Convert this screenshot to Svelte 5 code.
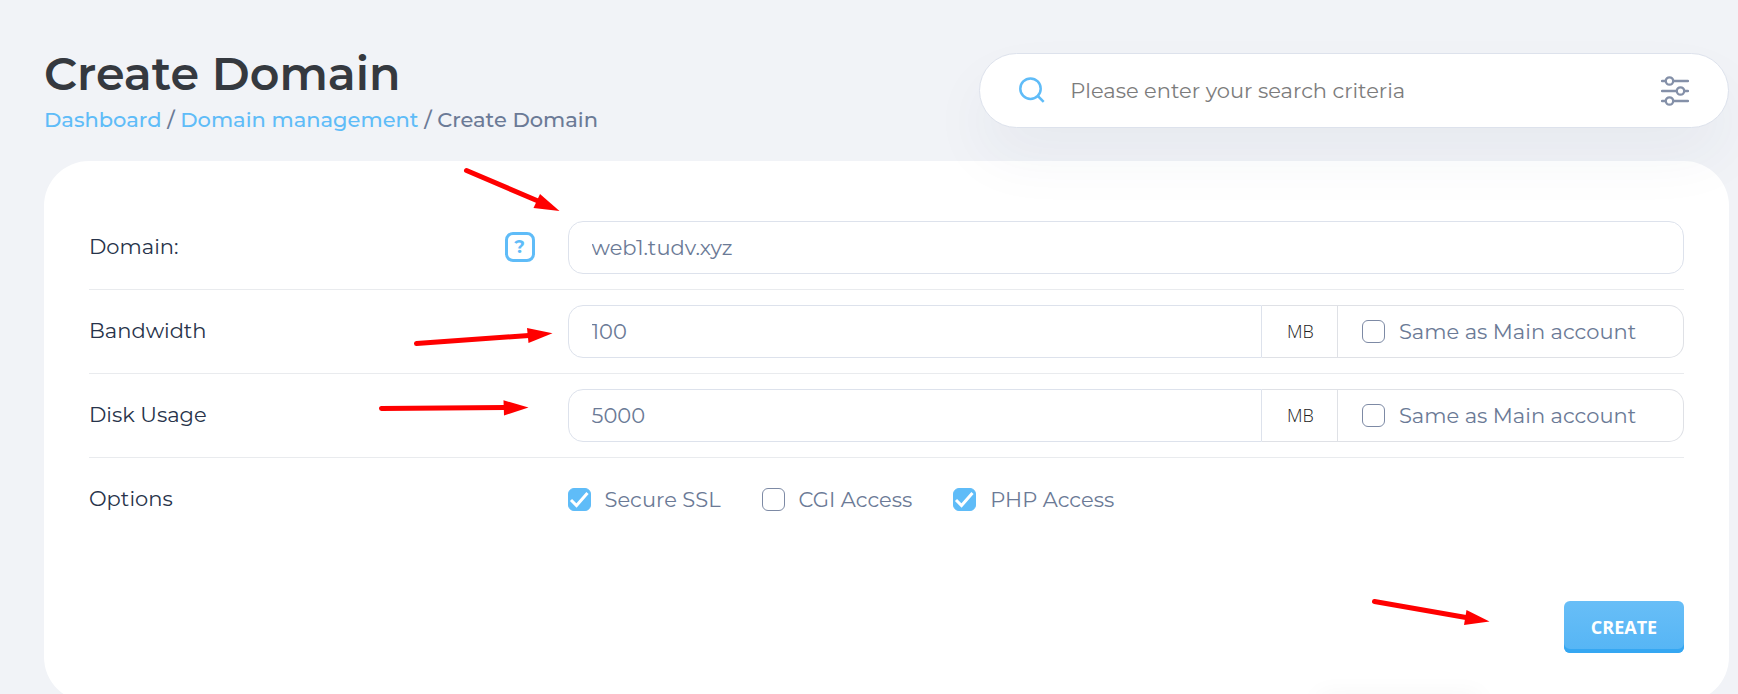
<script>
  let search = $state('');
  let domain = $state('web1.tudv.xyz');
  let limits = $state([
    { id: 'bandwidth', label: 'Bandwidth', value: '100', same: false },
    { id: 'disk', label: 'Disk Usage', value: '5000', same: false }
  ]);
  let options = $state([
    { label: 'Secure SSL', on: true },
    { label: 'CGI Access', on: false },
    { label: 'PHP Access', on: true }
  ]);
  const arrows = [
    { line: 'M466.5 170.5L538 201', head: '559.5,211 540,194 533.5,208' },
    { line: 'M416.5 343.5L529 335.5', head: '552.5,333.3 527,328 528.5,343' },
    { line: 'M381.5 408.5L505 407.5', head: '528.5,407.5 503.5,400.3 504,415.5' },
    { line: 'M1374.5 601.5L1466 617.5', head: '1489.5,621.5 1466.5,610 1464,625' }
  ];
</script>

{#snippet tick(item, key, label)}
  <label class="check">
    <span class="box">
      <input type="checkbox" bind:checked={item[key]} />
      <svg viewBox="0 0 23 23" aria-hidden="true"><path d="M3 12L8.5 17.5L19.5 5" /></svg>
    </span>
    {label}
  </label>
{/snippet}

<div class="page">
  <header>
    <div class="heading">
      <h1>Create Domain</h1>
      <nav aria-label="Breadcrumb">
        <a href="#dashboard">Dashboard</a> / <a href="#domains">Domain management</a> / <span>Create Domain</span>
      </nav>
    </div>
    <form class="search" role="search" onsubmit={(e) => e.preventDefault()}>
      <svg class="lens" viewBox="0 0 26 26" aria-hidden="true">
        <circle cx="11.5" cy="11.7" r="10.2" /><path d="M18.3 18.5L24.7 24.9" />
      </svg>
      <input type="search" aria-label="Search" placeholder="Please enter your search criteria" bind:value={search} />
      <button type="button" class="filter" aria-label="Search filters">
        <svg viewBox="0 0 28 30" aria-hidden="true">
          <path d="M1 5H4.5M12.5 5H27M1 15H15.5M23.5 15H27M1 25H4.5M12.5 25H27" />
          <circle cx="8.5" cy="5" r="3.7" /><circle cx="19.5" cy="15" r="3.7" /><circle cx="8.5" cy="25" r="3.7" />
        </svg>
      </button>
    </form>
  </header>

  <main>
    <form onsubmit={(e) => e.preventDefault()}>
      <div class="row">
        <div class="name">
          <label for="domain">Domain:</label>
          <button type="button" class="help" aria-label="Help">?</button>
        </div>
        <input id="domain" class="field" type="text" bind:value={domain} />
      </div>
      {#each limits as limit}
        <div class="row">
          <div class="name"><label for={limit.id}>{limit.label}</label></div>
          <div class="group">
            <input id={limit.id} class="field" type="text" bind:value={limit.value} />
            <span class="unit">MB</span>
            <div class="same">{@render tick(limit, 'same', 'Same as Main account')}</div>
          </div>
        </div>
      {/each}
      <div class="row last">
        <div class="name">Options</div>
        <div class="options">
          {#each options as option}
            {@render tick(option, 'on', option.label)}
          {/each}
        </div>
      </div>
      <div class="actions"><button type="submit" class="create">CREATE</button></div>
    </form>
  </main>

  <svg class="arrows" width="1738" height="694" viewBox="0 0 1738 694" aria-hidden="true">
    {#each arrows as arrow}
      <path d={arrow.line} /><polygon points={arrow.head} />
    {/each}
  </svg>
</div>

<style>
  :global(body) {
    margin: 0;
    background: #f1f3f7;
    overflow: hidden;
  }
  .page, input, button {
    font-family: Montserrat, Inter, sans-serif;
    font-size: 21px;
  }
  .page {
    position: relative;
    box-sizing: border-box;
    padding: 46px 9px 0 44px;
    color: #6b7a96;
    line-height: 28px;
  }
  input, button {
    box-sizing: border-box;
    margin: 0;
  }
  svg {
    fill: none;
  }
  header {
    position: relative;
    z-index: 1;
    display: flex;
    justify-content: space-between;
    height: 115px;
  }
  h1 {
    margin: 0;
    font-size: 46px;
    line-height: 56px;
    font-weight: 600;
    color: #35393f;
  }
  nav {
    padding-top: 4px;
    font-weight: 500;
  }
  nav a {
    color: #5fbcf8;
    text-decoration: none;
  }
  .search {
    display: flex;
    align-items: center;
    box-sizing: border-box;
    width: 44.5%;
    height: 75px;
    margin-top: 7px;
    padding: 0 39px;
    border: 1px solid #dde2ec;
    border-radius: 38px;
    background: #fff;
    box-shadow: 0 30px 60px rgba(40, 50, 90, 0.05);
  }
  .lens {
    flex: none;
    width: 26px;
    height: 26px;
    margin-bottom: 2px;
    stroke: #5fbcf8;
    stroke-width: 2.5;
  }
  .search input {
    flex: 1;
    min-width: 0;
    margin: 0 20px 0 25px;
    padding: 0;
    border: 0;
    outline: 0;
    background: none;
    color: #6b7a96;
  }
  .search input::placeholder {
    color: #7c7c7c;
  }
  .filter {
    display: flex;
    padding: 0;
    border: 0;
    background: none;
  }
  .filter svg {
    width: 28px;
    height: 30px;
    stroke: #8490a8;
    stroke-width: 2.3;
    stroke-linecap: round;
  }
  main {
    position: relative;
    overflow: hidden;
    padding: 45px 45px 49px;
    border-radius: 45px;
    background: #fff;
  }
  /* soft shadow rising from the lower edge of the card */
  main::after {
    content: "";
    position: absolute;
    right: 250px;
    bottom: -6px;
    width: 160px;
    height: 10px;
    box-shadow: 0 0 24px rgba(0, 0, 0, 0.08);
  }
  .row {
    display: grid;
    grid-template-columns: 30% 1fr;
    align-items: center;
    min-height: 53px;
    padding: 15px 0;
    border-bottom: 1px solid #e9ebee;
  }
  .last {
    border: 0;
  }
  .name {
    display: flex;
    align-items: center;
    justify-content: space-between;
    padding: 0 33px 1px 0;
    color: #27334a;
  }
  .help {
    width: 30px;
    height: 30px;
    padding: 0;
    border: 3px solid #5fbcf8;
    border-radius: 8px;
    background: #fff;
    color: #5fbcf8;
    font-size: 18px;
    line-height: 20px;
    font-weight: 700;
  }
  .field {
    width: 100%;
    min-width: 0;
    height: 53px;
    padding: 0 23px 1px;
    border: 1px solid #dde2ec;
    border-radius: 15px;
    background: #fff;
    color: #6b7a96;
  }
  .group {
    display: grid;
    grid-template-columns: 1fr 76px 31%;
  }
  .group .field {
    border-radius: 15px 0 0 15px;
  }
  .unit, .same {
    display: flex;
    align-items: center;
    border: 1px solid #dfe1e6;
    border-left: 0;
  }
  .unit {
    justify-content: center;
    padding: 0 0 2px 2px;
    color: #222;
    font-family: "Open Sans", sans-serif;
    font-size: 18px;
    font-weight: 300;
  }
  .same {
    padding-left: 24px;
    border-radius: 0 15px 15px 0;
  }
  .options {
    display: flex;
    gap: 41px;
  }
  .check {
    display: flex;
    align-items: center;
    gap: 14px;
    white-space: nowrap;
  }
  .box {
    display: grid;
    width: 23px;
    height: 23px;
  }
  .box > * {
    grid-area: 1 / 1;
    width: 23px;
    height: 23px;
  }
  .box input {
    appearance: none;
    border: 1px solid #7d8aa5;
    border-radius: 6px;
    background: #fff;
  }
  .box input:checked {
    border-color: #5fbcf8;
    background: #5fbcf8;
  }
  .box svg {
    visibility: hidden;
    pointer-events: none;
    stroke: #fff;
    stroke-width: 3;
  }
  .box input:checked + svg {
    visibility: visible;
  }
  .actions {
    display: flex;
    justify-content: flex-end;
    padding-top: 60px;
  }
  .create {
    width: 120px;
    height: 52px;
    padding: 0 0 1px;
    border: 0;
    border-radius: 6px;
    background: linear-gradient(#68bef7, #55b5f5);
    box-shadow: inset 0 -4px #35a7f2;
    color: #fff;
    font-family: "Open Sans", sans-serif;
    font-size: 18px;
    font-weight: 700;
  }
  .arrows {
    position: absolute;
    z-index: 2;
    top: 0;
    left: 0;
    pointer-events: none;
    fill: #f00;
    stroke: #f00;
  }
  .arrows path {
    stroke-width: 5;
    stroke-linecap: round;
  }
  .arrows polygon {
    stroke: none;
  }
</style>
